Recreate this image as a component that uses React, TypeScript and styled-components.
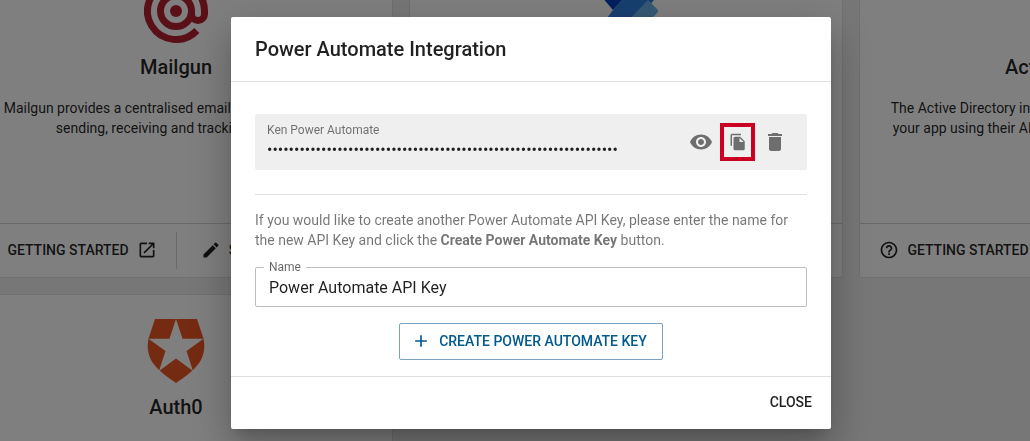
import React, { useState } from "react";
import styled, { createGlobalStyle, css } from "styled-components";

const Global = createGlobalStyle`
  * { box-sizing: border-box; }
  html, body { margin: 0; height: 100%; }
  body {
    font-family: Roboto, "Liberation Sans", sans-serif;
    color: rgba(0, 0, 0, 0.87);
    background: #eeeeee;
    overflow: hidden;
  }
`;

const Icon = styled.svg<{ $size?: number }>`
  width: ${(p) => p.$size ?? 20}px;
  height: ${(p) => p.$size ?? 20}px;
  fill: currentColor;
  flex: none;
  display: block;
`;

const Page = styled.main`
  height: 100vh;
  overflow: hidden;
`;

const CardGrid = styled.div`
  display: grid;
  grid-template-columns: repeat(3, 1fr);
  gap: 16px;
  margin: -46px -263px 0 -41px;
`;

const Card = styled.article`
  display: flex;
  flex-direction: column;
  background: #ffffff;
  border: 1px solid #e0e0e0;
  border-radius: 2px;
  height: 324px;
`;

const CardBody = styled.div`
  flex: 1;
  padding: 22px 24px 0;
  display: flex;
  flex-direction: column;
  align-items: center;
  text-align: center;
`;

const Logo = styled.div`
  height: 68px;
  display: flex;
  align-items: center;
  justify-content: center;
`;

const CardTitle = styled.h2`
  margin: 10px 0 19px;
  font-size: 20px;
  line-height: 24px;
  font-weight: 500;
`;

const CardText = styled.p`
  margin: 0;
  font-size: 14px;
  line-height: 20px;
  white-space: pre-line;
`;

const CardFooter = styled.footer`
  display: grid;
  grid-template-columns: 1fr 1fr;
  align-items: center;
  height: 54px;
  border-top: 1px solid #d4d4d4;
`;

const CardAction = styled.a`
  display: flex;
  align-items: center;
  justify-content: center;
  gap: 8px;
  height: 37px;
  font-size: 14px;
  line-height: 20px;
  font-weight: 500;
  text-transform: uppercase;
  text-decoration: none;
  white-space: nowrap;
  color: inherit;
  padding-bottom: 2px;
  & + & {
    padding-right: 4px;
    border-left: 1px solid #d4d4d4;
  }
`;

const Backdrop = styled.div`
  position: fixed;
  inset: 0;
  display: flex;
  align-items: flex-start;
  justify-content: center;
  padding: 17px 0 12px 32px;
  background: rgba(0, 0, 0, 0.5);
`;

const Dialog = styled.section`
  width: 100%;
  max-width: 600px;
  background: #ffffff;
  border-radius: 2px;
  box-shadow: 0 11px 15px -7px rgba(0, 0, 0, 0.2), 0 24px 38px 3px rgba(0, 0, 0, 0.14),
    0 9px 46px 8px rgba(0, 0, 0, 0.12);
`;

const DialogHeader = styled.header`
  padding: 20px 24px;
  border-bottom: 1px solid #e0e0e0;
`;

const DialogTitle = styled.h1`
  margin: 0;
  font-size: 20px;
  line-height: 24px;
  font-weight: 500;
`;

const DialogBody = styled.div`
  display: flex;
  flex-direction: column;
  padding: 32px 24px 16px;
`;

const KeyRow = styled.div`
  display: flex;
  align-items: center;
  gap: 2px;
  height: 56px;
  padding: 0 15px 0 12px;
  background: #efefef;
  border-radius: 2px;
`;

const KeyField = styled.label`
  flex: 1;
  display: flex;
  flex-direction: column;
  font-size: 12px;
  line-height: 16px;
  color: rgba(0, 0, 0, 0.54);
`;

const TextInput = styled.input`
  display: block;
  width: 100%;
  height: 24px;
  padding: 0;
  border: 0;
  outline: 0;
  background: transparent;
  font: 400 16px/24px Roboto, "Liberation Sans", sans-serif;
  color: rgba(0, 0, 0, 0.87);
`;

const IconButton = styled.button<{ $marked?: boolean }>`
  display: flex;
  align-items: center;
  justify-content: center;
  width: 35px;
  height: 38px;
  padding: 0;
  border: 0;
  background: transparent;
  color: #6e6e6e;
  cursor: pointer;
  ${(p) => p.$marked && css`border: 4px solid #cc0022;`}
`;

const Divider = styled.hr`
  width: 100%;
  margin: 24px 0 15px;
  border: 0;
  border-top: 1px solid #e0e0e0;
`;

const Hint = styled.p`
  margin: 0;
  font-size: 14px;
  line-height: 20px;
  color: rgba(0, 0, 0, 0.54);
`;

const Outline = styled.fieldset`
  min-width: 0;
  margin: 10px 0 16px;
  padding: 2px 13px 0;
  height: 47px;
  border: 1px solid #bdbdbd;
  border-radius: 2px;
`;

const OutlineLabel = styled.legend`
  margin-left: -5px;
  padding: 0 5px;
  font-size: 12px;
  line-height: 14px;
  color: rgba(0, 0, 0, 0.6);
`;

const CreateButton = styled.button`
  align-self: center;
  display: flex;
  align-items: center;
  gap: 8px;
  height: 37px;
  padding: 0 15px 2px 11px;
  border: 1px solid #7aa3bf;
  border-radius: 2px;
  background: #ffffff;
  font: 500 14px/20px Roboto, "Liberation Sans", sans-serif;
  text-transform: uppercase;
  color: #015a8f;
  cursor: pointer;
`;

const DialogFooter = styled.footer`
  display: flex;
  justify-content: flex-end;
  padding: 8px 11px;
  border-top: 1px solid #e0e0e0;
`;

const CloseButton = styled.button`
  height: 36px;
  padding: 0 8px 2px;
  border: 0;
  background: transparent;
  font: 500 14px/20px Roboto, "Liberation Sans", sans-serif;
  text-transform: uppercase;
  color: rgba(0, 0, 0, 0.87);
  cursor: pointer;
`;

const OpenIcon = () => (
  <Icon viewBox="0 0 24 24">
    <path d="M19 19H5V5h7V3H5a2 2 0 0 0-2 2v14a2 2 0 0 0 2 2h14c1.100 0 2-.9 2-2v-7h-2v7zM14 3v2h3.590l-9.830 9.830 1.410 1.410L19 6.410V10h2V3h-7z" />
  </Icon>
);

const EditIcon = () => (
  <Icon viewBox="0 0 24 24">
    <path d="M3 17.250V21h3.750L17.810 9.940l-3.750-3.750L3 17.250zM20.710 7.040a1 1 0 0 0 0-1.410l-2.340-2.340a1 1 0 0 0-1.410 0l-1.830 1.830 3.750 3.750 1.830-1.830z" />
  </Icon>
);

const HelpIcon = () => (
  <Icon viewBox="0 0 24 24">
    <path d="M11 18h2v-2h-2v2zm1-16C6.480 2 2 6.480 2 12s4.480 10 10 10 10-4.480 10-10S17.520 2 12 2zm0 18c-4.410 0-8-3.590-8-8s3.590-8 8-8 8 3.590 8 8-3.590 8-8 8zm0-14c-2.210 0-4 1.790-4 4h2c0-1.100.9-2 2-2s2 .9 2 2c0 2-3 1.750-3 5h2c0-2.250 3-2.500 3-5 0-2.210-1.790-4-4-4z" />
  </Icon>
);

const EyeIcon = () => (
  <Icon $size={24} viewBox="0 0 24 24">
    <path d="M12 4.500C7 4.500 2.730 7.610 1 12c1.730 4.390 6 7.500 11 7.500s9.270-3.110 11-7.500c-1.730-4.390-6-7.500-11-7.500zM12 17c-2.760 0-5-2.240-5-5s2.240-5 5-5 5 2.240 5 5-2.240 5-5 5zm0-8c-1.660 0-3 1.340-3 3s1.340 3 3 3 3-1.340 3-3-1.340-3-3-3z" />
  </Icon>
);

const CopyIcon = () => (
  <Icon $size={18} viewBox="0 0 24 24">
    <path d="M16 1H4a2 2 0 0 0-2 2v14h2V3h12V1zm-1 4H8a2 2 0 0 0-1.990 2L6 21a2 2 0 0 0 2 2h11a2 2 0 0 0 2-2V11l-6-6zm-1 7V6.500l5.500 5.500H14z" />
  </Icon>
);

const TrashIcon = () => (
  <Icon $size={24} viewBox="0 0 24 24">
    <path d="M6 19c0 1.100.9 2 2 2h8c1.100 0 2-.9 2-2V7H6v12zM19 4h-3.500l-1-1h-5l-1 1H5v2h14V4z" />
  </Icon>
);

const PlusIcon = () => (
  <Icon viewBox="0 0 24 24">
    <path d="M19 13h-6v6h-2v-6H5v-2h6V5h2v6h6v2z" />
  </Icon>
);

const MailgunLogo = () => (
  <svg width="64" height="64" viewBox="0 0 64 64" fill="none" stroke="#b3202e" strokeWidth="7">
    <path d="M52.800 51.500A28.500 28.500 0 1 1 60.500 32V35a6.500 6.500 0 0 1-13 0V32" />
    <circle cx="32" cy="32" r="15.500" />
    <circle cx="32" cy="32" r="6" fill="#b3202e" stroke="none" />
  </svg>
);

const AutomateLogo = () => (
  <svg width="64" height="64" viewBox="0 0 64 64">
    <path d="M1 10q-2-4 3-4h38L19 31z" fill="#0540c0" />
    <path d="M42 6h6q4 0 6 3l6 12-30 37H8q-5 0-5-5L19 31z" fill="#2f7fe0" />
    <path d="M54 21l9 9q2 2 0 4L42 56q-2 2-5 2H18z" fill="#6db3ea" />
  </svg>
);

const AuthLogo = () => (
  <svg width="58" height="64" viewBox="0 0 58 64">
    <path d="M8 0h42l6.500 19.500C60 38 52 49 29 64 6 49-2 38 1.500 19.500z" fill="#eb5424" />
    <path d="M29 0l6.500 19.800h21L39.500 32l6.500 20-17-12.500L12 52l6.500-20-17-12.200h21z" fill="#ffffff" />
  </svg>
);

type Integration = {
  name: string;
  text?: string;
  logo?: React.ReactNode;
};

const integrations: Integration[] = [
  {
    name: "Mailgun",
    text: "Mailgun provides a centralised email API service for the\nsending, receiving and tracking emails.",
    logo: <MailgunLogo />,
  },
  { name: "Power Automate", logo: <AutomateLogo /> },
  {
    name: "Active Directory",
    text: "The Active Directory integration allows your users to access\nyour app using their AD credentials and group permissions.",
  },
  { name: "Auth0", logo: <AuthLogo /> },
];

const IntegrationCard = ({ item }: { item: Integration }) => (
  <Card>
    <CardBody>
      <Logo>{item.logo}</Logo>
      <CardTitle>{item.name}</CardTitle>
      {item.text && <CardText>{item.text}</CardText>}
    </CardBody>
    <CardFooter>
      <CardAction href="#getting-started">
        <HelpIcon />
        Getting started
        <OpenIcon />
      </CardAction>
      <CardAction href="#setup">
        <EditIcon />
        Setup integration
      </CardAction>
    </CardFooter>
  </Card>
);

export default function App() {
  const [name, setName] = useState("Power Automate API Key");
  return (
    <>
      <Global />
      <Page>
        <CardGrid>
          {integrations.map((item) => (
            <IntegrationCard key={item.name} item={item} />
          ))}
        </CardGrid>
      </Page>
      <Backdrop>
        <Dialog role="dialog" aria-modal="true" aria-labelledby="dialog-title">
          <DialogHeader>
            <DialogTitle id="dialog-title">Power Automate Integration</DialogTitle>
          </DialogHeader>
          <DialogBody>
            <KeyRow>
              <KeyField>
                Ken Power Automate
                <TextInput type="password" readOnly value={"x".repeat(65)} />
              </KeyField>
              <IconButton aria-label="Show key"><EyeIcon /></IconButton>
              <IconButton aria-label="Copy key" $marked><CopyIcon /></IconButton>
              <IconButton aria-label="Delete key"><TrashIcon /></IconButton>
            </KeyRow>
            <Divider />
            <Hint>
              If you would like to create another Power Automate API Key, please enter the name for
              the new API Key and click the <strong>Create Power Automate Key</strong> button.
            </Hint>
            <Outline>
              <OutlineLabel><label htmlFor="key-name">Name</label></OutlineLabel>
              <TextInput id="key-name" value={name} onChange={(e) => setName(e.target.value)} />
            </Outline>
            <CreateButton>
              <PlusIcon />
              Create Power Automate Key
            </CreateButton>
          </DialogBody>
          <DialogFooter>
            <CloseButton>Close</CloseButton>
          </DialogFooter>
        </Dialog>
      </Backdrop>
    </>
  );
}
